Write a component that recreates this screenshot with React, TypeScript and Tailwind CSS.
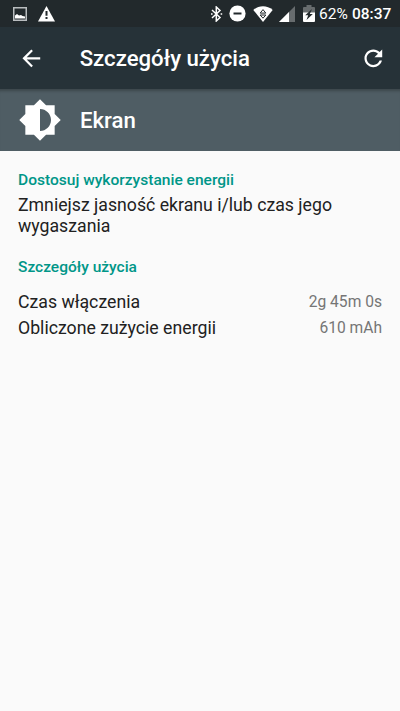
import React from 'react';

interface UsageRow {
  label: string;
  value: string;
}

const usageRows: UsageRow[] = [
  { label: 'Czas włączenia', value: '2g 45m 0s' },
  { label: 'Obliczone zużycie energii', value: '610 mAh' },
];

const StatusBar: React.FC = () => {
  return (
    <div className="flex h-[27px] items-center justify-between bg-[#22292c] pl-[13px] pr-[9px] text-white">
      <div className="flex items-center gap-[11px]">
        {/* Screenshot notification */}
        <svg className="h-[14px] w-[14px]" viewBox="0 0 14 14">
          <rect x="0.75" y="0.75" width="12.5" height="12.5" fill="none" stroke="#b9bdbf" strokeWidth="1.5" />
          <path d="M2 11.5V8.5L4 7l2 1.5L8 8l1.5 1L12 9.5v2z" fill="#fff" />
        </svg>
        {/* Warning notification */}
        <svg className="h-[16px] w-[17px]" viewBox="0 0 17 16">
          <path d="M8.5 0L17 15.5H0z" fill="#fff" />
          <path d="M7.5 5h2v4.8h-2zM7.5 11h2v2h-2z" fill="#22292c" />
        </svg>
      </div>

      <div className="flex items-center">
        {/* Bluetooth */}
        <svg className="mr-[6px] h-[16px] w-[12px]" viewBox="0 0 12 16">
          <path d="M1 4l8 7.5L5.3 15V1L9 4.5 1 12" fill="none" stroke="#fff" strokeWidth="1.5" />
          <path d="M9.6 7.2h1.6v1.6H9.6zM0 7.2h1.6v1.6H0z" fill="#fff" />
        </svg>
        {/* Do not disturb */}
        <svg className="mr-[7px] h-[17px] w-[17px]" viewBox="0 0 17 17">
          <circle cx="8.5" cy="8.5" r="8.1" fill="#fff" />
          <path d="M4.5 7.5h8v2h-8z" fill="#22292c" />
        </svg>
        {/* Wifi with traffic arrows */}
        <svg className="mr-[6px] h-[16px] w-[20px]" viewBox="0 0 20 16">
          <path d="M0.3 4C6-1 14-1 19.7 4L10 16z" fill="#fff" />
          <path d="M10 3.6l2.8 3.5H7.2zM7.2 9h5.6L10 12.2z" fill="#fff" stroke="#22292c" strokeWidth="1" />
        </svg>
        {/* Cell signal */}
        <svg className="mr-[8px] h-[16px] w-[16px]" viewBox="0 0 16 16">
          <path d="M16 0v16H0z" fill="#676c6e" />
          <path d="M10 6v10H0z" fill="#fff" />
        </svg>
        {/* Battery */}
        <svg className="mr-[4px] h-[17px] w-[12px]" viewBox="0 0 12 17">
          <path d="M3.5 0h5v2H11a1 1 0 0 1 1 1v6H0V3a1 1 0 0 1 1-1h2.5z" fill="#676c6e" />
          <path d="M0 7.5h12V16a1 1 0 0 1-1 1H1a1 1 0 0 1-1-1z" fill="#fff" />
          <path d="M9 4L2.2 10.2h3L3.5 15l6.3-6h-3z" fill="#22292c" />
        </svg>
        <span className="mr-[4px] w-[29px] whitespace-nowrap text-[15.5px] leading-[18px]">62%</span>
        <span className="w-[39px] whitespace-nowrap text-[15.5px] font-medium leading-[18px]">08:37</span>
      </div>
    </div>
  );
};

const App: React.FC = () => {
  return (
    <div className="flex h-[711px] w-[400px] flex-col overflow-hidden bg-[#fafafa] font-['Roboto',sans-serif]">
      <StatusBar />

      <header className="flex h-[62px] items-center bg-[#263238] pl-[18px] pr-[13px] text-white">
        <svg className="h-[26.67px] w-[26.67px]" viewBox="0 0 24 24" fill="currentColor">
          <path d="M20 11H7.83l5.59-5.59L12 4l-8 8 8 8 1.41-1.41L7.83 13H20v-2z" />
        </svg>
        <h1 className="ml-[35px] flex-1 text-[22.2px] font-medium leading-[26px]">Szczegóły użycia</h1>
        <svg className="h-[26.67px] w-[26.67px]" viewBox="0 0 24 24" fill="currentColor">
          <path d="M17.65 6.35C16.2 4.9 14.21 4 12 4c-4.42 0-7.99 3.58-7.99 8s3.57 8 7.99 8c3.73 0 6.84-2.55 7.73-6h-2.08c-.82 2.33-3.04 4-5.65 4-3.31 0-6-2.69-6-6s2.69-6 6-6c1.66 0 3.14.69 4.22 1.78L13 11h7V4l-2.35 2.35z" />
        </svg>
      </header>

      <div className="flex h-[62px] items-center bg-[#4f5d64] pl-[18px] text-white shadow-[inset_0_4px_3px_-2px_rgba(0,0,0,0.25)]">
        <svg className="h-[44px] w-[44px]" viewBox="0 0 24 24" fill="currentColor">
          <path d="M20 15.31L23.31 12 20 8.69V4h-4.69L12 .69 8.69 4H4v4.69L.69 12 4 15.31V20h4.69L12 23.31 15.31 20H20v-4.69zM12 18V6c3.31 0 6 2.69 6 6s-2.69 6-6 6z" />
        </svg>
        <h2 className="ml-[18px] text-[22.2px] font-medium leading-[26px]">Ekran</h2>
      </div>

      <main className="px-[18px] pt-5 text-[#212121]">
        <h3 className="text-[15.55px] font-medium leading-[18px] text-[#009688]">Dostosuj wykorzystanie energii</h3>
        <p className="mt-[6px] text-[17.7px] leading-[21px]">
          Zmniejsz jasność ekranu i/lub czas jego wygaszania
        </p>

        <h3 className="mt-[21px] text-[15.5px] font-medium leading-[18px] text-[#009688]">Szczegóły użycia</h3>
        <div className="mt-[13px]">
          {usageRows.map((row) => (
            <div key={row.label} className="flex h-[26px] items-center justify-between">
              <span className="text-[17.7px] leading-[21px]">{row.label}</span>
              <span className="text-[15.6px] leading-[18px] text-[#757575]">{row.value}</span>
            </div>
          ))}
        </div>
      </main>
    </div>
  );
};

export default App;
